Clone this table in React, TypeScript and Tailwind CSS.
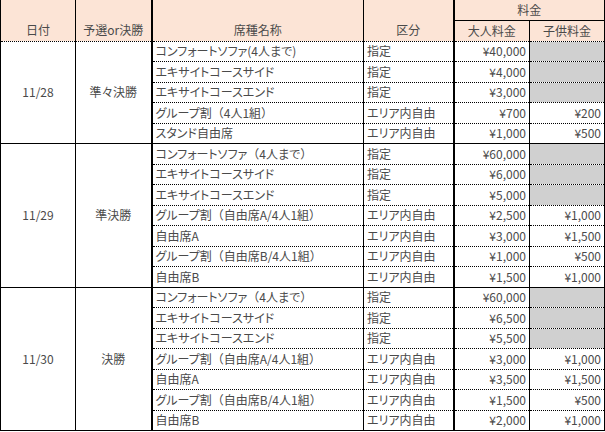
import React from 'react'

type Row = { name: string; kind: string; adult: string; child?: string }
type Block = { date: string; round: string; rows: Row[] }

const blocks: Block[] = [
  {
    date: '11/28',
    round: '準々決勝',
    rows: [
      { name: 'コンフォートソファ(4人まで)', kind: '指定', adult: '¥40,000' },
      { name: 'エキサイトコースサイド', kind: '指定', adult: '¥4,000' },
      { name: 'エキサイトコースエンド', kind: '指定', adult: '¥3,000' },
      { name: 'グループ割（4人1組）', kind: 'エリア内自由', adult: '¥700', child: '¥200' },
      { name: 'スタンド自由席', kind: 'エリア内自由', adult: '¥1,000', child: '¥500' },
    ],
  },
  {
    date: '11/29',
    round: '準決勝',
    rows: [
      { name: 'コンフォートソファ（4人まで）', kind: '指定', adult: '¥60,000' },
      { name: 'エキサイトコースサイド', kind: '指定', adult: '¥6,000' },
      { name: 'エキサイトコースエンド', kind: '指定', adult: '¥5,000' },
      { name: 'グループ割（自由席A/4人1組）', kind: 'エリア内自由', adult: '¥2,500', child: '¥1,000' },
      { name: '自由席A', kind: 'エリア内自由', adult: '¥3,000', child: '¥1,500' },
      { name: 'グループ割（自由席B/4人1組）', kind: 'エリア内自由', adult: '¥1,000', child: '¥500' },
      { name: '自由席B', kind: 'エリア内自由', adult: '¥1,500', child: '¥1,000' },
    ],
  },
  {
    date: '11/30',
    round: '決勝',
    rows: [
      { name: 'コンフォートソファ（4人まで）', kind: '指定', adult: '¥60,000' },
      { name: 'エキサイトコースサイド', kind: '指定', adult: '¥6,500' },
      { name: 'エキサイトコースエンド', kind: '指定', adult: '¥5,500' },
      { name: 'グループ割（自由席A/4人1組）', kind: 'エリア内自由', adult: '¥3,000', child: '¥1,000' },
      { name: '自由席A', kind: 'エリア内自由', adult: '¥3,500', child: '¥1,500' },
      { name: 'グループ割（自由席B/4人1組）', kind: 'エリア内自由', adult: '¥1,500', child: '¥500' },
      { name: '自由席B', kind: 'エリア内自由', adult: '¥2,000', child: '¥1,000' },
    ],
  },
]

// full-width brackets keep their full width, kana stay proportional
const SeatName = ({ text }: { text: string }) => (
  <>
    {text.split(/([（）])/).map((part, i) =>
      part === '（' || part === '）' ? (
        <span key={i} className="[font-feature-settings:normal]">{part}</span>
      ) : (
        <span key={i}>{part}</span>
      )
    )}
  </>
)

const th = 'bg-[#fce4d6] font-normal border-solid border-black border-l border-r text-center px-0'
const td = 'border-solid border-black border-l border-r border-b whitespace-nowrap overflow-hidden px-[3px] align-middle'

export default function App() {
  return (
    <div className="bg-white w-[605px] h-[432px] overflow-hidden">
      <table
        className="border-collapse table-fixed w-[604px] text-[12px] leading-none text-[#4a4a4a] [font-feature-settings:'palt']"
        style={{ fontFamily: '"Noto Sans CJK JP", "Noto Sans", sans-serif' }}
      >
        <colgroup>
          <col className="w-[75px]" />
          <col className="w-[76px]" />
          <col className="w-[212px]" />
          <col className="w-[90px]" />
          <col className="w-[76px]" />
          <col className="w-[75px]" />
        </colgroup>
        <thead>
          <tr className="h-[20px]">
            <th rowSpan={2} className={`${th} align-bottom pb-[5px] border-b [border-bottom-style:dotted]`}>日付</th>
            <th rowSpan={2} className={`${th} align-bottom pb-[5px] border-r-2 border-b [border-bottom-style:dotted]`}>予選or決勝</th>
            <th rowSpan={2} className={`${th} align-bottom pb-[5px] border-b [border-bottom-style:dotted]`}>席種名称</th>
            <th rowSpan={2} className={`${th} align-bottom pb-[5px] border-r-2 border-b [border-bottom-style:dotted]`}>区分</th>
            <th colSpan={2} className={`${th} align-middle border-b`}>料金</th>
          </tr>
          <tr className="h-[21px]">
            <th className={`${th} align-middle border-b [border-bottom-style:dotted] [border-right-style:dotted]`}>大人料金</th>
            <th className={`${th} align-middle border-b [border-bottom-style:dotted]`}>子供料金</th>
          </tr>
        </thead>
        <tbody>
          {blocks.map((block) =>
            block.rows.map((row, i) => {
              const last = i === block.rows.length - 1
              const bottom = last ? '' : '[border-bottom-style:dotted]'
              return (
                <tr key={block.date + i} className="h-[20.5px]">
                  {i === 0 && (
                    <>
                      <td rowSpan={block.rows.length} className={`${td} text-center`}>{block.date}</td>
                      <td rowSpan={block.rows.length} className={`${td} text-center border-r-2`}>{block.round}</td>
                    </>
                  )}
                  <td className={`${td} ${bottom} text-left`}>
                    <SeatName text={row.name} />
                  </td>
                  <td className={`${td} ${bottom} text-left border-r-2`}>{row.kind}</td>
                  <td className={`${td} ${bottom} text-right`}>{row.adult}</td>
                  <td className={`${td} ${bottom} text-right ${row.child ? '' : 'bg-[#d0d0d0]'}`}>{row.child ?? ''}</td>
                </tr>
              )
            })
          )}
        </tbody>
      </table>
    </div>
  )
}
